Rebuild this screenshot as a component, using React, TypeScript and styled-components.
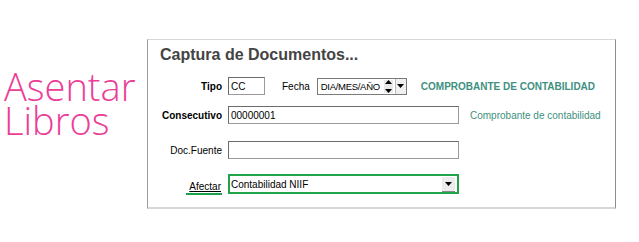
import React from "react";
import styled, { createGlobalStyle } from "styled-components";

const GlobalStyle = createGlobalStyle`
  html, body {
    margin: 0;
    padding: 0;
    background: #fff;
  }
  body {
    font-family: "Liberation Sans", Arial, sans-serif;
    font-size: 10px;
    color: #000;
  }
`;

const Page = styled.div`
  display: flex;
  align-items: flex-start;
  width: 639px;
  height: 242px;
  padding-top: 39px;
  box-sizing: border-box;
`;

const Brand = styled.div`
  width: 147px;
  padding: 30px 0 0 4px;
  box-sizing: border-box;
  font-family: "Open Sans", "Liberation Sans", sans-serif;
  font-weight: 300;
  font-size: 38px;
  line-height: 34px;
  color: #ec3d97;
  white-space: nowrap;
`;

const Panel = styled.section`
  width: 469px;
  height: 170px;
  box-sizing: border-box;
  border-top: 1px solid #d8d8d8;
  border-left: 1px solid #9a9a9a;
  border-right: 1px solid #8c8c8c;
  border-bottom: 2px solid #d6d6d6;
  padding: 5px 0 0 12px;
`;

const Title = styled.h2`
  margin: 0;
  font-size: 16px;
  line-height: 20px;
  font-weight: bold;
  color: #444;
`;

const Row = styled.div<{ $top: number; $h?: number }>`
  display: flex;
  align-items: center;
  height: ${(p) => p.$h ?? 18}px;
  margin-top: ${(p) => p.$top}px;
  white-space: nowrap;
`;

const Label = styled.label<{ $bold?: boolean }>`
  width: 62px;
  margin-right: 6px;
  text-align: right;
  font-weight: ${(p) => (p.$bold ? "bold" : "normal")};
`;

const UnderLabel = styled.span`
  display: inline-block;
  padding: 0 1px 1px 3px;
  border-bottom: 2px solid #1aa04a;
  text-decoration: underline;
  text-underline-offset: 1px;
  margin-top: 8px;
`;

const Field = styled.div<{ $w: number }>`
  width: ${(p) => p.$w}px;
  height: 18px;
  box-sizing: border-box;
  border: 1px solid #6b6b6b;
  border-bottom-color: #9a9a9a;
  border-right-color: #9a9a9a;
  padding: 0 2px;
  display: flex;
  align-items: center;
  background: #fff;
`;

const Inline = styled.span<{ $ml: number }>`
  margin-left: ${(p) => p.$ml}px;
  margin-right: 7px;
`;

const DateBox = styled.div`
  width: 90px;
  height: 17px;
  box-sizing: border-box;
  border: 1px solid #7a7a7a;
  display: flex;
  align-items: center;
  padding-left: 3px;
  font-size: 9.5px;
  letter-spacing: -0.3px;
`;

const DateText = styled.span`
  flex: 1;
`;

const Spin = styled.div`
  width: 9px;
  height: 13px;
  display: flex;
  flex-direction: column;
  justify-content: space-between;
  align-items: center;
  background: #e8e8e8;
  margin-right: 2px;
`;

const DropBtn = styled.div<{ $h: number }>`
  width: 10px;
  height: ${(p) => p.$h}px;
  border-left: 1px solid #bbb;
  background: #f0f0f0;
  display: flex;
  align-items: center;
  justify-content: center;
`;

const Heading = styled.span`
  margin-left: 14px;
  font-weight: bold;
  color: #409080;
`;

const Note = styled.span`
  margin-left: 11px;
  color: #409080;
`;

const Select = styled.div`
  width: 231px;
  height: 20px;
  box-sizing: border-box;
  border: 2px solid #21a34a;
  display: flex;
  align-items: center;
  padding-left: 1px;
`;

const SelectText = styled.span`
  flex: 1;
`;

const SelectBtn = styled.div`
  width: 13px;
  height: 14px;
  margin-right: 2px;
  background: #ececec;
  border-bottom: 1px solid #888;
  display: flex;
  align-items: center;
  justify-content: center;
`;

const Tri = ({ up }: { up?: boolean }) => (
  <svg width="7" height="4" viewBox="0 0 7 4">
    <path d={up ? "M0 4 L3.5 0 L7 4 Z" : "M0 0 L7 0 L3.5 4 Z"} fill="#000" />
  </svg>
);

const App: React.FC = () => (
  <>
    <GlobalStyle />
    <Page>
      <Brand>
        Asentar
        <br />
        Libros
      </Brand>
      <Panel>
        <Title>Captura de Documentos...</Title>
        <Row $top={12}>
          <Label $bold>Tipo</Label>
          <Field $w={37}>CC</Field>
          <Inline $ml={17}>Fecha</Inline>
          <DateBox>
            <DateText>DIA/MES/AÑO</DateText>
            <Spin>
              <Tri up />
              <Tri />
            </Spin>
            <DropBtn $h={15}>
              <Tri />
            </DropBtn>
          </DateBox>
          <Heading>COMPROBANTE DE CONTABILIDAD</Heading>
        </Row>
        <Row $top={11}>
          <Label $bold>Consecutivo</Label>
          <Field $w={231}>00000001</Field>
          <Note>Comprobante de contabilidad</Note>
        </Row>
        <Row $top={17}>
          <Label>Doc.Fuente</Label>
          <Field $w={231} />
        </Row>
        <Row $top={15} $h={20}>
          <Label>
            <UnderLabel>Afectar</UnderLabel>
          </Label>
          <Select>
            <SelectText>Contabilidad NIIF</SelectText>
            <SelectBtn>
              <Tri />
            </SelectBtn>
          </Select>
        </Row>
      </Panel>
    </Page>
  </>
);

export default App;
